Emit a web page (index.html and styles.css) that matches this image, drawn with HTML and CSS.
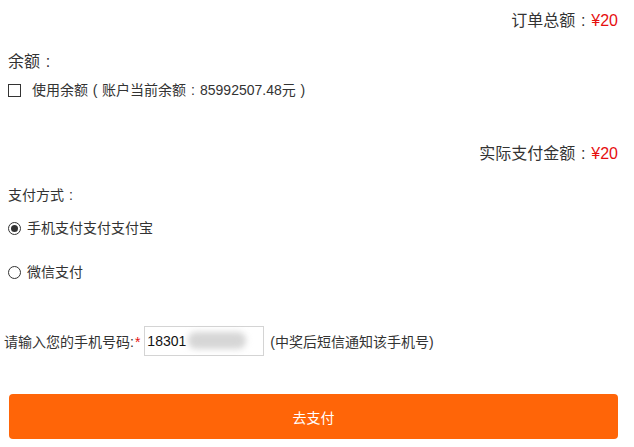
FILE: index.html
```html
<!DOCTYPE html>
<html lang="zh-CN">
<head>
    <meta charset="UTF-8">
    <meta name="viewport" content="width=device-width, initial-scale=1.0">
    <title>支付订单</title>
    <link rel="stylesheet" href="styles.css">
</head>
<body>
    <div class="page">
        <div class="amount-line">订单总额<span class="punct">:</span><span class="price">¥20</span></div>

        <div class="section-title">余额<span class="punct">:</span></div>
        <label class="check-row">
            <input type="checkbox" class="check-box">
            <span>使用余额<span class="punct">(</span>账户当前余额<span class="punct">:</span>85992507.48元<span class="punct">)</span></span>
        </label>

        <div class="amount-line real-pay">实际支付金额<span class="punct">:</span><span class="price">¥20</span></div>

        <div class="pay-title">支付方式<span class="punct">:</span></div>
        <label class="radio-row">
            <input type="radio" name="payType" class="radio-dot" checked>
            <span>手机支付支付支付宝</span>
        </label>
        <label class="radio-row">
            <input type="radio" name="payType" class="radio-dot">
            <span>微信支付</span>
        </label>

        <div class="phone-row">
            <span class="phone-label">请输入您的手机号码:<em class="required">*</em></span>
            <span class="phone-field">
                <input type="text" class="phone-input" value="18301" autocomplete="off">
                <span class="phone-mask"></span>
            </span>
            <span class="phone-tip">(中奖后短信通知该手机号)</span>
        </div>

        <button class="pay-btn" id="payBtn">去支付</button>
    </div>
</body>
</html>
```

FILE: styles.css
```css
* { margin: 0; padding: 0; box-sizing: border-box; }
body {
    font-family: "Liberation Sans", "Noto Sans CJK SC", sans-serif;
    font-size: 14px;
    color: #333;
    background: #fff;
}
.page { padding: 9px 16px 0 8px; }
/* full-width punctuation drawn centred in its box */
.punct { display: inline-block; width: 1em; text-align: center; }
.amount-line {
    text-align: right;
    font-size: 16px;
    line-height: 24px;
}
.price { color: #e60f0f; }
.section-title {
    margin-top: 17px;
    font-size: 16px;
    line-height: 24px;
}
.check-row {
    display: flex;
    align-items: center;
    height: 20px;
    margin-top: 6px;
    line-height: 20px;
}
.check-box {
    appearance: none;
    width: 13px;
    height: 13px;
    border: 1px solid #333;
    background: #fff;
    margin-right: 11px;
}
.real-pay { margin-top: 42px; }
.pay-title {
    margin-top: 19px;
    line-height: 20px;
}
.radio-row {
    display: flex;
    align-items: center;
    height: 20px;
    margin-top: 13px;
    line-height: 20px;
}
.radio-row + .radio-row { margin-top: 24px; }
.radio-dot {
    appearance: none;
    width: 13px;
    height: 13px;
    border: 1px solid #333;
    border-radius: 50%;
    background: #fff;
    margin-right: 6px;
    display: flex;
    align-items: center;
    justify-content: center;
}
.radio-dot:checked::after {
    content: "";
    width: 7px;
    height: 7px;
    border-radius: 50%;
    background: #333;
}
.phone-row {
    display: flex;
    align-items: center;
    margin-top: 44px;
    margin-left: -4px;
}
.required { color: #e60f0f; font-style: normal; margin-left: 1px; }
.phone-field {
    position: relative;
    margin-left: 4px;
    margin-right: 6px;
}
.phone-input {
    display: block;
    width: 120px;
    height: 30px;
    border: 1px solid #d4d4d4;
    padding: 0 2px;
    font-family: "Liberation Sans", sans-serif;
    font-size: 14px;
    color: #111;
    outline: none;
}
.phone-mask {
    position: absolute;
    left: 44px;
    top: 6px;
    width: 58px;
    height: 17px;
    border-radius: 8px;
    background: #d6d6d6;
    filter: blur(3px);
}
.pay-btn {
    display: block;
    width: 609px;
    height: 45px;
    margin: 38px 0 0 1px;
    border: none;
    border-radius: 4px;
    background: #ff6508;
    color: #fff;
    font-family: "Liberation Sans", "Noto Sans CJK SC", sans-serif;
    font-size: 14px;
    cursor: pointer;
}
```
